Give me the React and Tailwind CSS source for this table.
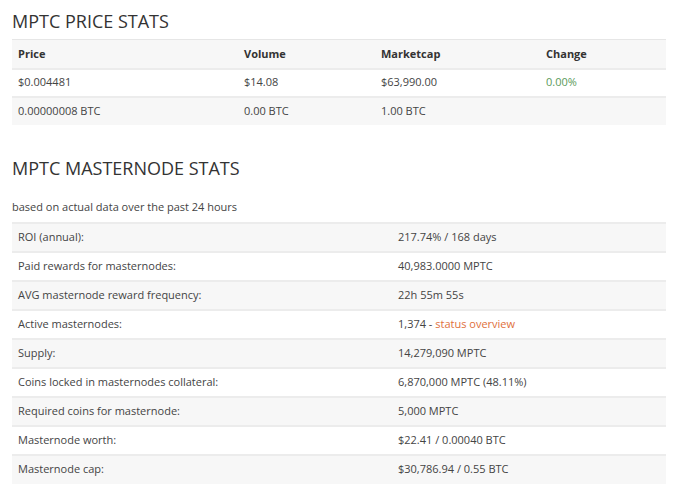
import React from 'react'

const priceRows = [
  ['$0.004481', '$14.08', '$63,990.00', '0.00%'],
  ['0.00000008 BTC', '0.00 BTC', '1.00 BTC', ''],
]

const mnRows = [
  ['ROI (annual):', '217.74% / 168 days'],
  ['Paid rewards for masternodes:', '40,983.0000 MPTC'],
  ['AVG masternode reward frequency:', '22h 55m 55s'],
  ['Active masternodes:', 'link'],
  ['Supply:', '14,279,090 MPTC'],
  ['Coins locked in masternodes collateral:', '6,870,000 MPTC (48.11%)'],
  ['Required coins for masternode:', '5,000 MPTC'],
  ['Masternode worth:', '$22.41 / 0.00040 BTC'],
  ['Masternode cap:', '$30,786.94 / 0.55 BTC'],
]

const App = () => {
  return (
    <div className="min-h-screen bg-white px-3 pt-[9px] text-[#444] font-['Open_Sans',sans-serif] text-[11px]">

      {/* Price stats */}
      <h2 className="text-[18px] leading-[24px] text-[#333] font-normal h-[30px]">MPTC PRICE STATS</h2>
      <table className="w-[654px] border-collapse text-left">
        <thead className="bg-[#f7f7f7]">
          <tr className="border-t border-[#e6e6e6] h-[29px]">
            <th className="w-[226px] px-[6px] font-bold text-[#333]">Price</th>
            <th className="w-[137px] px-[6px] font-bold text-[#333]">Volume</th>
            <th className="w-[165px] px-[6px] font-bold text-[#333]">Marketcap</th>
            <th className="px-[6px] font-bold text-[#333]">Change</th>
          </tr>
        </thead>
        <tbody>
          {priceRows.map((row, i) => (
            <tr key={i} className={`border-t-2 border-[#ececec] h-[28px] ${i % 2 ? 'bg-[#f7f7f7]' : 'bg-white'}`}>
              <td className="px-[6px]">{row[0]}</td>
              <td className="px-[6px]">{row[1]}</td>
              <td className="px-[6px]">{row[2]}</td>
              <td className="px-[6px] text-[#5a9a5a]">{row[3]}</td>
            </tr>
          ))}
        </tbody>
      </table>

      {/* Masternode stats */}
      <h2 className="mt-[31px] text-[18px] leading-[24px] text-[#333] font-normal">MPTC MASTERNODE STATS</h2>
      <p className="mt-[19px] mb-[7px] leading-[16px]">based on actual data over the past 24 hours</p>
      <table className="w-[654px] border-collapse text-left">
        <tbody>
          {mnRows.map((row, i) => (
            <tr key={i} className={`border-t-2 border-[#ececec] h-[29px] ${i % 2 ? 'bg-white' : 'bg-[#f7f7f7]'}`}>
              <td className="w-[380px] px-[6px]">{row[0]}</td>
              <td className="px-[6px]">
                {row[1] === 'link' ? (
                  <span>1,374 - <span className="text-[#e0703c]">status overview</span></span>
                ) : row[1]}
              </td>
            </tr>
          ))}
        </tbody>
      </table>
    </div>
  )
}

export default App
